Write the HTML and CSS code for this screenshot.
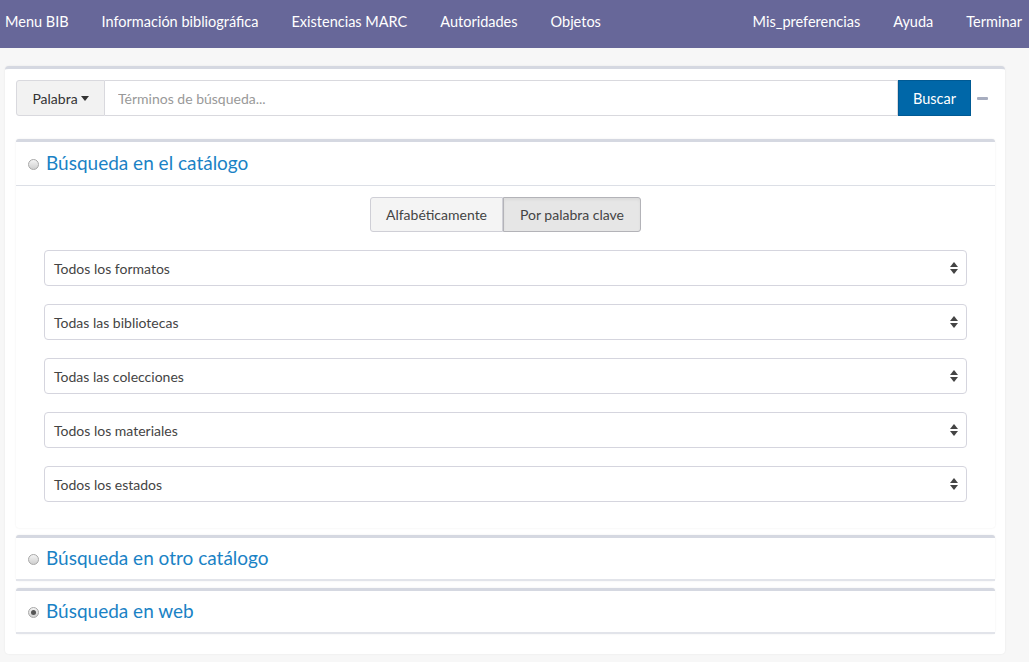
FILE: index.html
```html
<!DOCTYPE html>
<html lang="es">
<head>
<meta charset="utf-8">
<title>Búsqueda</title>
<link rel="stylesheet" href="styles.css">
</head>
<body>
<nav class="navbar">
  <ul class="nav-left">
    <li>Menu BIB</li>
    <li>Información bibliográfica</li>
    <li>Existencias MARC</li>
    <li>Autoridades</li>
    <li>Objetos</li>
  </ul>
  <ul class="nav-right">
    <li>Mis_preferencias</li>
    <li>Ayuda</li>
    <li>Terminar</li>
  </ul>
</nav>
<main class="card">
  <div class="search-row">
    <div class="search-group">
      <button class="btn-drop">Palabra <span class="caret"></span></button>
      <input class="search-input" type="text" placeholder="Términos de búsqueda...">
      <button class="btn-search">Buscar</button>
    </div>
    <span class="minus"></span>
  </div>

  <section class="panel">
    <div class="panel-heading">
      <span class="radio"></span>
      <h2 class="panel-title">Búsqueda en el catálogo</h2>
    </div>
    <div class="panel-body">
      <div class="btn-group">
        <button class="seg">Alfabéticamente</button>
        <button class="seg active">Por palabra clave</button>
      </div>
      <div class="select">Todos los formatos<span class="arrows"></span></div>
      <div class="select">Todas las bibliotecas<span class="arrows"></span></div>
      <div class="select">Todas las colecciones<span class="arrows"></span></div>
      <div class="select">Todos los materiales<span class="arrows"></span></div>
      <div class="select">Todos los estados<span class="arrows"></span></div>
    </div>
  </section>

  <section class="panel">
    <div class="panel-heading">
      <span class="radio"></span>
      <h2 class="panel-title">Búsqueda en otro catálogo</h2>
    </div>
  </section>

  <section class="panel">
    <div class="panel-heading">
      <span class="radio checked"></span>
      <h2 class="panel-title">Búsqueda en web</h2>
    </div>
  </section>
</main>
</body>
</html>
```
FILE: styles.css
```css
* { box-sizing: border-box; }
html, body { margin: 0; padding: 0; }
body {
  background: #f7f7f7;
  font-family: Lato, "Open Sans", sans-serif;
  color: #333;
  width: 1029px;
  height: 662px;
  overflow: hidden;
}
.navbar {
  height: 48px;
  background: #676799;
  display: flex;
  justify-content: space-between;
  align-items: center;
  padding-bottom: 5px;
  color: #fff;
  font-size: 14.5px;
}
.navbar ul {
  list-style: none;
  margin: 0;
  padding: 0;
  display: flex;
}
.nav-left { gap: 33px; padding-left: 5px !important; }
.nav-right { gap: 33px; padding-right: 7px !important; }

.card {
  margin: 18px 24px 0 5px;
  background: #fff;
  border-top: 3px solid #d5d8e1;
  border-radius: 4px;
  box-shadow: 0 0 2px rgba(0,0,0,0.08);
  padding: 11px 10px 19px 11px;
  height: 588px;
}
.search-row {
  display: flex;
  align-items: center;
}
.search-group {
  display: flex;
  height: 36px;
  width: 955px;
}
.btn-drop {
  width: 89px;
  background: #f2f2f2;
  border: 1px solid #d9d9de;
  border-radius: 3px 0 0 3px;
  font: inherit;
  font-size: 14px;
  color: #333;
  padding: 0;
  display: flex;
  align-items: center;
  justify-content: center;
  gap: 3px;
}
.caret {
  width: 0; height: 0;
  border-left: 4.5px solid transparent;
  border-right: 4.5px solid transparent;
  border-top: 5px solid #333;
}
.search-input {
  flex: 1;
  border: 1px solid #d9d9de;
  border-left: none;
  font: inherit;
  font-size: 14px;
  padding: 0 13px;
  color: #333;
  outline: none;
}
.search-input::placeholder { color: #999; }
.btn-search {
  width: 73px;
  background: #0067a8;
  border: 1px solid #005a94;
  color: #fff;
  font: inherit;
  font-size: 14.5px;
  padding: 0;
}
.minus {
  width: 11px;
  height: 3px;
  background: #a7adbf;
  margin-left: 6px;
  border-radius: 1px;
}

.panel {
  margin-top: 23px;
  border-top: 3px solid #d5d8e1;
  border-radius: 3px;
  box-shadow: 0 0 2px rgba(0,0,0,0.08);
  background: #fff;
}
.panel + .panel { margin-top: 7px; }
.panel-heading {
  height: 44px;
  display: flex;
  align-items: center;
  padding-left: 12px;
  padding-bottom: 3px;
  border-bottom: 1px solid #dcdfe6;
}
.panel + .panel .panel-heading { border-bottom: 2px solid #e2e4ea; height: 43px; }
.radio {
  width: 11px; height: 11px;
  border-radius: 50%;
  border: 1px solid #a8a8a8;
  background: linear-gradient(#f4f4f4, #cfcfcf);
  margin-right: 7px;
  position: relative;
  top: 2px;
}
.radio.checked::after {
  content: "";
  position: absolute;
  left: 2px; top: 2px;
  width: 5px; height: 5px;
  border-radius: 50%;
  background: #555;
}
.panel-title {
  margin: 0;
  font-weight: 400;
  font-size: 19px;
  color: #1a82c5;
}
.panel-body {
  padding: 11px 28px 26px 28px;
}
.btn-group {
  display: flex;
  justify-content: center;
  margin-bottom: 18px;
}
.seg {
  height: 35px;
  border: 1px solid #cfcfd6;
  background: #f4f4f4;
  font: inherit;
  font-size: 14px;
  color: #444;
  padding: 0 13px;
}
.seg:first-child { border-radius: 3px 0 0 3px; width: 133px; }
.seg.active {
  background: #e6e6e6;
  border-color: #b3b3b8;
  border-radius: 0 3px 3px 0;
  width: 138px;
  box-shadow: inset 0 2px 3px rgba(0,0,0,0.05);
}
.select {
  height: 36px;
  border: 1px solid #d5d5de;
  border-radius: 4px;
  display: flex;
  align-items: center;
  justify-content: space-between;
  padding: 0 8px 0 9px;
  font-size: 14px;
  color: #444;
  margin-top: 18px;
}
.btn-group + .select { margin-top: 0; }
.arrows {
  width: 8px;
  height: 12px;
  position: relative;
}
.arrows::before, .arrows::after {
  content: "";
  position: absolute;
  left: 0;
  border-left: 4px solid transparent;
  border-right: 4px solid transparent;
}
.arrows::before { top: 0; border-bottom: 5px solid #444; }
.arrows::after { bottom: 0; border-top: 5px solid #444; }
```
